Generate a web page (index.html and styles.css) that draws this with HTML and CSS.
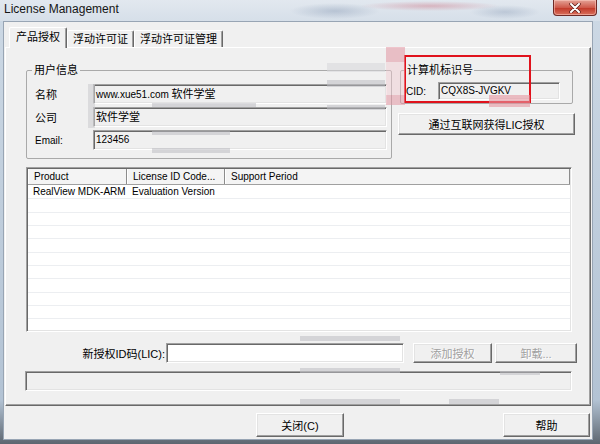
FILE: index.html
```html
<!DOCTYPE html>
<html lang="zh-CN">
<head>
  <meta charset="UTF-8" />
  <title>License Management</title>
  <link rel="stylesheet" href="styles.css">
</head>
<body>

<div class="window">
  <div class="titlebar">
    <span class="title">License Management</span>
    <button class="close-btn" aria-label="close">
      <svg width="12" height="10" viewBox="0 0 12 10">
        <path d="M2 1 L10 9 M10 1 L2 9" stroke="#5a1c18" stroke-width="3.4" stroke-linecap="round"/>
        <path d="M2 1 L10 9 M10 1 L2 9" stroke="#fff" stroke-width="2" stroke-linecap="round"/>
      </svg>
    </button>
  </div>

  <div class="client">
    <div class="tabs">
      <div class="tab active">产品授权</div>
      <div class="tab">浮动许可证</div>
      <div class="tab">浮动许可证管理</div>
    </div>

    <div class="page">
      <div class="top-row">
        <fieldset class="group user-info">
          <legend>用户信息</legend>
          <div class="field-row">
            <label>名称</label>
            <div class="edit latin">www.xue51.com <span class="zh">软件学堂</span></div>
          </div>
          <div class="field-row">
            <label>公司</label>
            <div class="edit">软件学堂</div>
          </div>
          <div class="field-row">
            <label class="latin">Email:</label>
            <div class="edit latin">123456</div>
          </div>
        </fieldset>

        <div class="side">
          <fieldset class="group cid-box">
            <legend>计算机标识号</legend>
            <div class="field-row">
              <label class="latin">CID:</label>
              <div class="edit latin">CQX8S-JVGKV</div>
            </div>
          </fieldset>
          <button class="btn wide">通过互联网获得LIC授权</button>
        </div>
      </div>

      <div class="listview latin">
        <div class="lv-header">
          <div class="col c1">Product</div>
          <div class="col c2">License ID Code...</div>
          <div class="col c3">Support Period</div>
        </div>
        <div class="lv-body">
          <div class="lv-row">
            <div class="col c1">RealView MDK-ARM</div>
            <div class="col c2">Evaluation Version</div>
            <div class="col c3"></div>
          </div>
        </div>
      </div>

      <div class="lic-row">
        <label>新授权ID码(LIC):</label>
        <div class="edit white"></div>
        <button class="btn add" disabled>添加授权</button>
        <button class="btn remove" disabled>卸载...</button>
      </div>

      <div class="edit status"></div>
    </div>

    <div class="footer">
      <button class="btn big">关闭(C)</button>
      <button class="btn big help">帮助</button>
    </div>
  </div>

  <!-- marker drawn round the machine id -->
  <div class="highlight"></div>

  <!-- pixelated smears left on the capture -->
  <div class="smudges">
    <div class="sm sm1"></div>
    <div class="sm sm2"></div>
    <div class="sm sm3"></div>
    <div class="sm sm4"></div>
    <div class="sm sm5"></div>
    <div class="sm sm6"></div>
    <div class="sm sm7"></div>
    <div class="sm pink p1"></div>
    <div class="sm pink p2"></div>
    <div class="sm pink p3"></div>
    <div class="sm pink p4"></div>
    <div class="sm sm8"></div>
    <div class="sm sm9"></div>
    <div class="sm sm10"></div>
    <div class="sm sm11"></div>
    <div class="sm sm12"></div>
  </div>
</div>

</body>
</html>
```

FILE: styles.css
```css
* {
  box-sizing: border-box;
}

body {
  margin: 0;
  font-family: "Liberation Sans", "Noto Sans CJK SC", sans-serif;
  font-size: 11px;
  color: #000;
}

.latin {
  font-size: 10px;
}

.latin .zh {
  font-size: 11px;
}

.window {
  position: relative;
  width: 600px;
  height: 444px;
  display: flex;
  flex-direction: column;
  background: linear-gradient(to bottom, #cdd9e5, #b3c3d4 90%, #5d6670);
  overflow: hidden;
}

/* aero title bar */
.titlebar {
  height: 21px;
  display: flex;
  align-items: flex-start;
  background:
    radial-gradient(ellipse 70px 5px at 430px 6px, rgba(205, 120, 135, 0.45), transparent),
    radial-gradient(ellipse 45px 8px at 335px 11px, rgba(115, 135, 165, 0.35), transparent),
    radial-gradient(ellipse 35px 7px at 505px 12px, rgba(115, 135, 165, 0.3), transparent),
    linear-gradient(#e2e8ef, #d6dfe9);
}

.title {
  margin: 2px 0 0 4px;
  font-size: 12px;
  line-height: 14px;
  color: #151515;
}

.close-btn {
  margin-left: auto;
  margin-right: 3px;
  width: 44px;
  height: 16px;
  padding: 0;
  display: flex;
  align-items: center;
  justify-content: center;
  border: 1px solid #6e2a26;
  border-top: 0;
  border-radius: 0 0 4px 4px;
  background: linear-gradient(#e4a397, #cf5a4b 50%, #c23b2b 55%, #d9705c);
  box-shadow: inset 0 0 0 1px rgba(255, 210, 200, 0.5);
}

.client {
  flex: 1;
  margin: 0 7px 4px 3px;
  display: flex;
  flex-direction: column;
  background: #f0f0f0;
  border: 1px solid #98a5b4;
}

/* tab strip */
.tabs {
  position: relative;
  z-index: 1;
  display: flex;
  align-items: flex-end;
  margin: 5px 0 0 5px;
}

.tab {
  height: 17px;
  padding: 0 5px;
  line-height: 16px;
  border: 1px solid;
  border-color: #fff #696969 transparent #fff;
  border-bottom: 0;
  border-radius: 2px 2px 0 0;
  box-shadow: inset -1px 0 0 #a0a0a0;
  white-space: nowrap;
}

.tab.active {
  height: 21px;
  padding: 0 6px;
  line-height: 19px;
  margin-bottom: -1px;
  background: #f0f0f0;
}

.page {
  margin: 0 1px;
  padding: 15px 13px 14px 20px;
  border: 1px solid;
  border-color: #fff #696969 #696969 #fff;
  box-shadow: inset -1px -1px 0 #a0a0a0;
}

.top-row {
  display: grid;
  grid-template-columns: 366px 177px;
  column-gap: 6px;
  align-items: start;
}

.group {
  margin: 0;
  min-width: 0;
  border: 1px solid #a9a9a9;
  border-radius: 2px;
}

.group legend {
  padding: 0 2px;
  line-height: 14px;
}

.user-info {
  padding: 0 4px 8px 8px;
}

.user-info legend {
  margin-left: -3px;
}

.field-row {
  display: flex;
  align-items: center;
  height: 20px;
  margin-top: 3px;
}

.field-row:first-of-type {
  margin-top: 7px;
}

.user-info label {
  width: 58px;
  flex: none;
}

.edit {
  height: 20px;
  padding-left: 2px;
  line-height: 18px;
  background: #f0f0f0;
  border: 1px solid;
  border-color: #a0a0a0 #fff #fff #a0a0a0;
  box-shadow: inset 1px 1px 0 #696969, inset -1px -1px 0 #e3e3e3;
  white-space: nowrap;
  overflow: hidden;
}

.field-row .edit {
  flex: 1;
}

.edit.white {
  background: #fff;
}

.cid-box {
  margin: 0 2px;
  padding: 0 12px 3px 5px;
}

.cid-box legend {
  padding: 0 1px;
}

.cid-box .field-row {
  height: 18px;
  margin-top: 5px;
}

.cid-box label {
  width: 32px;
  flex: none;
}

.cid-box .edit {
  height: 18px;
  line-height: 16px;
}

/* classic raised buttons */
.btn {
  padding: 0;
  font: inherit;
  color: #000;
  background: #f0f0f0;
  border: 1px solid;
  border-color: #fff #696969 #696969 #fff;
  box-shadow: inset -1px -1px 0 #a0a0a0, inset 1px 1px 0 #e3e3e3;
}

.btn:disabled {
  color: #a0a0a0;
  text-shadow: 1px 1px 0 #fff;
}

.btn.wide {
  width: 100%;
  height: 22px;
  margin-top: 9px;
}

/* license list */
.listview {
  width: 546px;
  height: 165px;
  margin-top: 8px;
  padding: 1px;
  display: flex;
  flex-direction: column;
  background: #fff;
  border: 1px solid;
  border-color: #a0a0a0 #fff #fff #a0a0a0;
  box-shadow: inset 1px 1px 0 #696969, inset -1px -1px 0 #e3e3e3;
}

.lv-header {
  display: flex;
  height: 16px;
  line-height: 15px;
  background: #f4f4f4;
  border-bottom: 1px solid #a0a0a0;
}

.lv-header .col {
  padding-left: 6px;
  border-right: 1px solid #8c8c8c;
  box-shadow: inset 1px 0 0 #fff;
}

.col {
  white-space: nowrap;
  overflow: hidden;
}

.c1 {
  width: 99px;
  flex: none;
}

.c2 {
  width: 98px;
  flex: none;
}

.c3 {
  flex: 1;
}

.lv-body {
  flex: 1;
  background: repeating-linear-gradient(to bottom, transparent 0 12.33px, #eceef1 12.33px 13.33px);
  background-position: 0 1px;
}

.lv-row {
  display: flex;
  height: 14px;
  line-height: 14px;
}

.lv-row .col {
  padding-left: 5px;
}

.lic-row {
  display: flex;
  align-items: center;
  height: 20px;
  margin-top: 11px;
}

.lic-row label {
  width: 140px;
  padding-right: 1px;
  text-align: right;
}

.lic-row .edit {
  width: 238px;
}

.btn.add {
  width: 79px;
  height: 20px;
  margin-left: 9px;
}

.btn.remove {
  width: 82px;
  height: 20px;
  margin-left: 3px;
}

.status {
  width: 547px;
  margin-top: 8px;
  margin-left: -1px;
}

.footer {
  display: flex;
  margin-top: 7px;
  padding: 0 2px 0 252px;
}

.btn.big {
  width: 88px;
  height: 24px;
}

.btn.help {
  width: 87px;
  margin-left: auto;
}

.highlight {
  position: absolute;
  left: 404px;
  top: 55px;
  width: 127px;
  height: 48px;
  border: 2px solid #e0121c;
}

.smudges {
  position: absolute;
  inset: 0;
  pointer-events: none;
}

.sm {
  position: absolute;
  background: rgba(190, 190, 195, 0.55);
}

.sm1 { left: 88px; top: 84px; width: 7px; height: 44px; background: rgba(205, 205, 208, 0.6); }
.sm2 { left: 152px; top: 103px; width: 104px; height: 4px; }
.sm3 { left: 152px; top: 131px; width: 78px; height: 4px; }
.sm4 { left: 152px; top: 148px; width: 78px; height: 5px; }
.sm5 { left: 327px; top: 63px; width: 58px; height: 9px; background: rgba(215, 215, 218, 0.55); }
.sm6 { left: 327px; top: 80px; width: 58px; height: 7px; }
.sm7 { left: 327px; top: 105px; width: 58px; height: 5px; }
.sm8 { left: 300px; top: 336px; width: 100px; height: 5px; }
.sm9 { left: 300px; top: 368px; width: 100px; height: 5px; }
.sm10 { left: 300px; top: 399px; width: 100px; height: 5px; }
.sm11 { left: 449px; top: 399px; width: 50px; height: 5px; }
.sm12 { left: 500px; top: 371px; width: 40px; height: 4px; }

.pink { background: rgba(225, 150, 162, 0.55); }
.p1 { left: 386px; top: 47px; width: 19px; height: 15px; }
.p2 { left: 386px; top: 62px; width: 19px; height: 33px; background: rgba(240, 200, 207, 0.45); }
.p3 { left: 386px; top: 95px; width: 19px; height: 10px; }
.p4 { left: 489px; top: 95px; width: 41px; height: 12px; background: rgba(230, 150, 160, 0.6); }
```
